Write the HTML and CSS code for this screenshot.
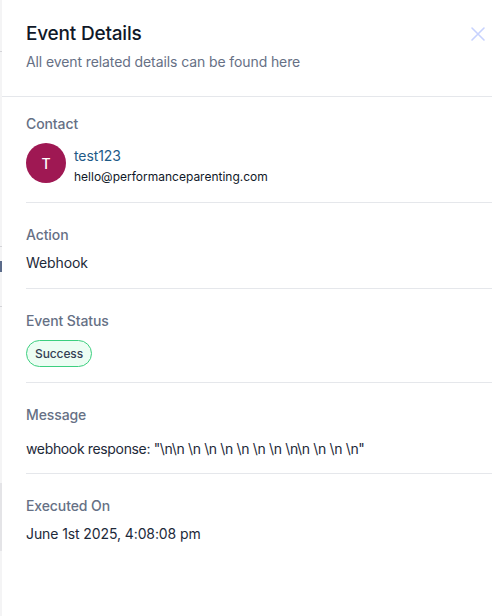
FILE: index.html
```html
<!DOCTYPE html>
<html lang="en">
<head>
<meta charset="utf-8">
<title>Event Details</title>
<link rel="stylesheet" href="styles.css">
</head>
<body>
<div class="page">
  <div class="backdrop">
    <span class="bd-line l1"></span>
    <span class="bd-line l2"></span>
    <span class="bd-mark"></span>
    <span class="bd-line l3"></span>
    <span class="bd-block"></span>
  </div>
  <aside class="drawer">
    <header class="drawer-header">
      <div class="titles">
        <h1 class="title">Event Details</h1>
        <p class="subtitle">All event related details can be found here</p>
      </div>
      <button class="close" aria-label="Close">
        <svg width="16" height="16" viewBox="0 0 16 16" fill="none" stroke="#c7d2fe" stroke-width="1.6" stroke-linecap="round"><path d="M2 2L14 14M14 2L2 14"/></svg>
      </button>
    </header>
    <div class="drawer-body">
      <section class="section contact-section">
        <div class="label">Contact</div>
        <div class="contact">
          <div class="avatar">T</div>
          <div class="contact-info">
            <div class="contact-name">test123</div>
            <div class="contact-email">hello@performanceparenting.com</div>
          </div>
        </div>
      </section>
      <section class="section">
        <div class="label">Action</div>
        <div class="value">Webhook</div>
      </section>
      <section class="section status-section">
        <div class="label">Event Status</div>
        <div class="status-row"><span class="badge">Success</span></div>
      </section>
      <section class="section message-section">
        <div class="label">Message</div>
        <div class="value message">webhook response: "\n\n \n \n \n \n \n \n \n\n \n \n \n"</div>
      </section>
      <section class="section last">
        <div class="label">Executed On</div>
        <div class="value">June 1st 2025, 4:08:08 pm</div>
      </section>
    </div>
  </aside>
</div>
</body>
</html>
```

FILE: styles.css
```css
* { box-sizing: border-box; }
html, body { margin: 0; padding: 0; }
body {
  font-family: Inter, "Noto Sans", "Liberation Sans", sans-serif;
  background: #ffffff;
  width: 492px;
  height: 616px;
  overflow: hidden;
  letter-spacing: -0.1px;
}
.page {
  display: flex;
  height: 616px;
}
.backdrop {
  width: 2px;
  flex: 0 0 2px;
  background: #f4f4f5;
  position: relative;
}
.bd-line { position: absolute; left: 0; width: 2px; height: 1px; background: #d4d4d8; }
.l1 { top: 51px; }
.l2 { top: 246px; }
.l3 { top: 306px; }
.bd-mark { position: absolute; left: 0; top: 261px; width: 2px; height: 11px; background: #5b6b8a; }
.bd-block { position: absolute; left: 0; top: 483px; width: 2px; height: 68px; background: #e4e4e7; }

.drawer {
  flex: 1;
  background: #fff;
  display: flex;
  flex-direction: column;
  box-shadow: -1px 0 3px rgba(0,0,0,0.04);
}
.drawer-header {
  display: flex;
  justify-content: space-between;
  align-items: flex-start;
  padding: 22px 6px 0 24px;
  height: 97px;
  border-bottom: 1px solid #e5e7eb;
}
.title {
  margin: 0;
  font-size: 19px;
  font-weight: 500;
  line-height: 24px;
  color: #101828;
  letter-spacing: -0.2px;
}
.subtitle {
  margin: 6px 0 0;
  font-size: 14px;
  line-height: 20px;
  color: #667085;
}
.close {
  border: 0;
  background: none;
  padding: 0;
  margin-top: 4px;
  width: 16px;
  height: 16px;
  display: flex;
}
.drawer-body {
  padding-left: 24px;
}
.section {
  padding: 22px 0 15px;
  border-bottom: 1px solid #e5e7eb;
}
.section.last { border-bottom: 0; }
.contact-section { padding-top: 17px; padding-bottom: 16px; }
.label {
  font-size: 14px;
  line-height: 20px;
  font-weight: 500;
  color: #667085;
}
.value {
  margin-top: 8px;
  font-size: 14px;
  line-height: 20px;
  color: #1d2939;
}
.message-section .value { margin-top: 14px; }
.message { letter-spacing: -0.35px; }
.message-section { padding-bottom: 14px; }
.contact {
  display: flex;
  align-items: flex-start;
  gap: 8px;
  margin-top: 9px;
}
.avatar {
  width: 40px;
  height: 40px;
  flex: 0 0 40px;
  border-radius: 50%;
  background: #9f1853;
  color: #fff;
  font-size: 14px;
  font-weight: 500;
  display: flex;
  align-items: center;
  justify-content: center;
}
.contact-info { display: flex; flex-direction: column; }
.contact-name {
  font-size: 14px;
  line-height: 20px;
  color: #1e5a87;
  margin-top: 3px;
}
.contact-email {
  font-size: 12px;
  line-height: 18px;
  color: #101828;
  margin-top: 2px;
  letter-spacing: 0;
}
.status-section { padding-bottom: 15px; }
.status-row { margin-top: 9px; display: flex; }
.badge {
  display: inline-flex;
  align-items: center;
  height: 27px;
  padding: 0 8px;
  border: 1px solid #3ccf7f;
  border-radius: 14px;
  background: #ecfdf3;
  font-size: 12px;
  font-weight: 500;
  color: #344054;
}
```
